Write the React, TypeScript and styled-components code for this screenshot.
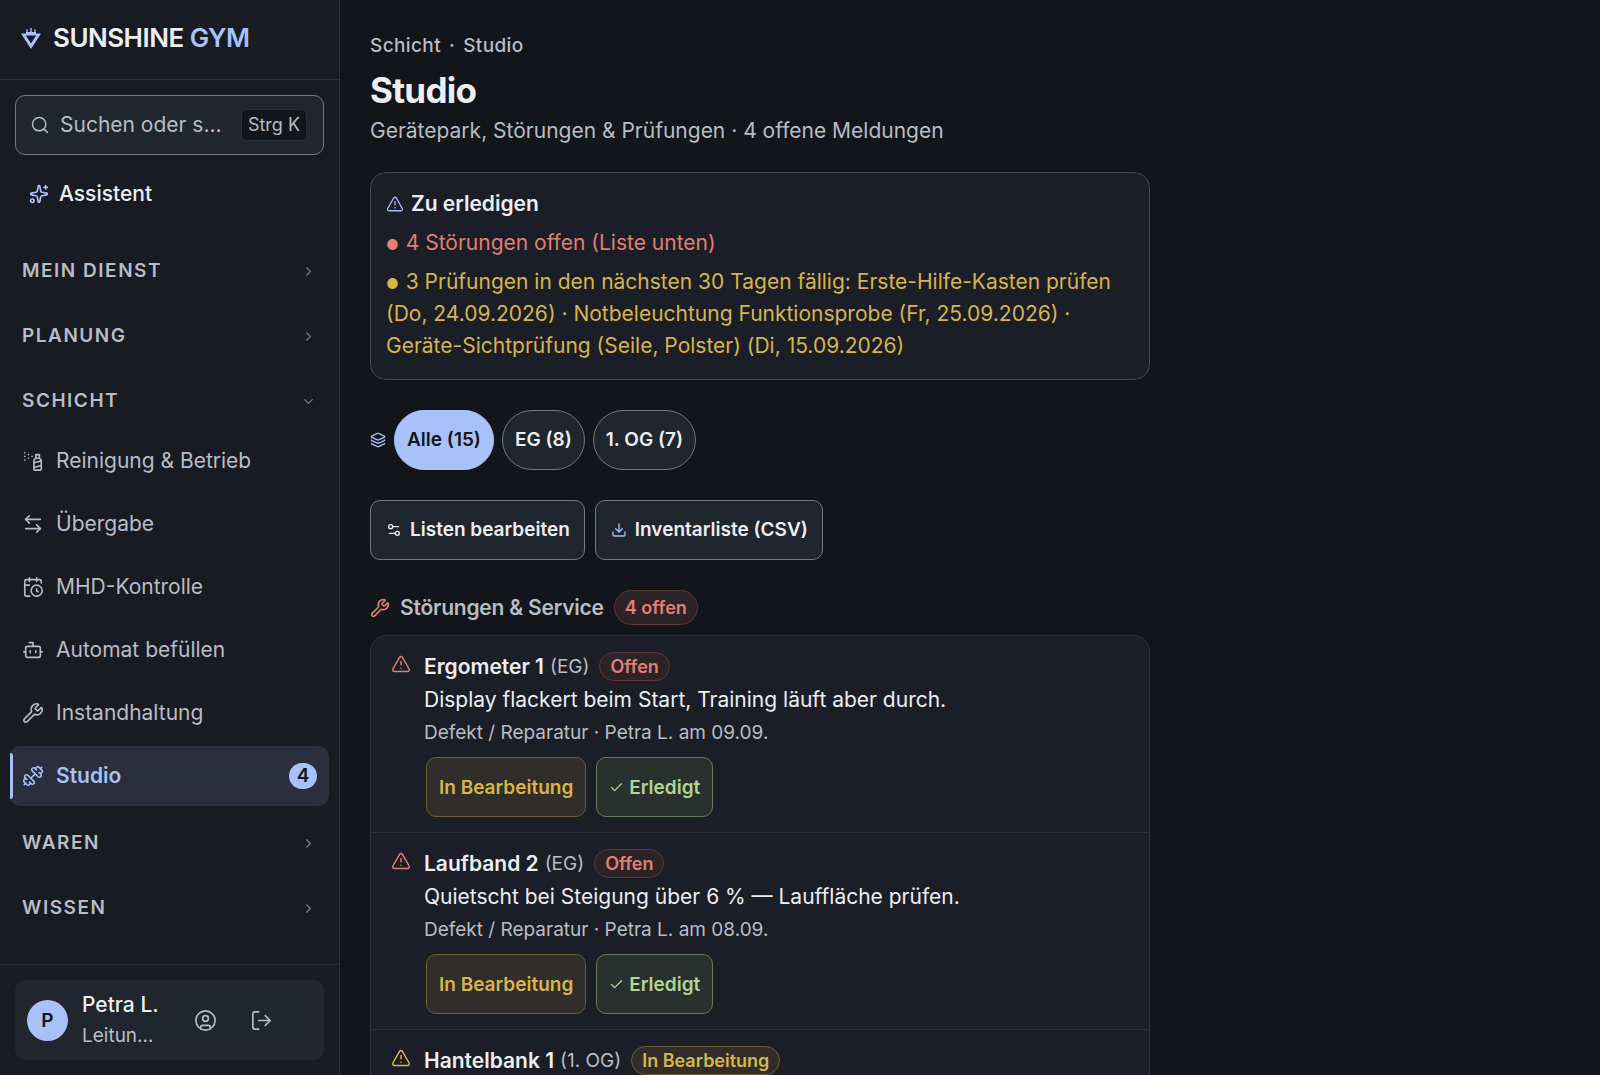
import React from "react";
import styled, { createGlobalStyle, css } from "styled-components";
import {
  ArrowLeftRight, Bot, CalendarClock, Check, ChevronDown, ChevronRight, CircleUser, Download,
  Dumbbell, Layers, LogOut, Search, Settings2, Sparkles, SprayCan, TriangleAlert, Wrench,
} from "lucide-react";

const c = {
  bg: "#12161b",
  side: "#181b22",
  panel: "#1b1e26",
  raised: "#20262d",
  line: "#2b2f37",
  strong: "#747880",
  text: "#eceef4",
  muted: "#b9bcc5",
  accent: "#a9c1f9",
  red: "#e07f72",
  yellow: "#d6b549",
  green: "#b0d492",
};

const Global = createGlobalStyle`
  *, *::before, *::after { box-sizing: border-box; }
  body { margin: 0; background: ${c.bg}; color: ${c.text}; font: 400 21px/32px Inter, "Liberation Sans", sans-serif; }
  button { font: inherit; color: inherit; border: 0; background: none; padding: 0; cursor: pointer; text-align: left; }
  a { color: inherit; text-decoration: none; }
  h1, h2, h3, p, ul { margin: 0; padding: 0; }
  ul { list-style: none; }
  svg { flex: none; }
`;

const Shell = styled.div`
  display: grid;
  grid-template-columns: 340px minmax(0, 1fr);
  height: 100vh;
`;

const Sidebar = styled.aside`
  display: flex;
  flex-direction: column;
  min-height: 0;
  background: ${c.side};
  border-right: 1px solid ${c.line};
`;

const Brand = styled.a`
  display: flex;
  align-items: center;
  gap: 11px;
  height: 80px;
  padding: 0 20px 3px;
  border-bottom: 1px solid ${c.line};
  font-size: 26px;
  font-weight: 600;
  letter-spacing: -0.02em;
`;

const BrandAccent = styled.span`
  color: ${c.accent};
`;

const Tools = styled.div`
  display: flex;
  flex-direction: column;
  gap: 9px;
  padding: 15px 15px 17px;
`;

const SearchButton = styled.button`
  display: flex;
  align-items: center;
  gap: 10px;
  height: 60px;
  padding: 0 16px 0 14px;
  border: 1px solid ${c.strong};
  border-radius: 10px;
  background: ${c.raised};
  color: ${c.muted};
`;

const SearchHint = styled.span`
  flex: 1;
  white-space: nowrap;
`;

const Kbd = styled.kbd`
  padding: 0 6px;
  border: 1px solid ${c.line};
  border-radius: 6px;
  background: ${c.bg};
  font: 400 18px/30px Inter, sans-serif;
  white-space: nowrap;
`;

const AssistantLink = styled.a`
  display: flex;
  align-items: center;
  gap: 10px;
  height: 60px;
  padding: 0 14px;
  font-weight: 500;
  svg { color: ${c.accent}; }
`;

const Nav = styled.nav`
  flex: 1;
  min-height: 0;
  display: flex;
  flex-direction: column;
  gap: 5px;
  padding: 0 10px;
  overflow: hidden;
`;

const GroupButton = styled.button`
  display: flex;
  align-items: center;
  justify-content: space-between;
  width: 100%;
  height: 60px;
  padding: 0 13px 0 12px;
  color: ${c.muted};
  font-size: 19px;
  font-weight: 600;
  letter-spacing: 0.08em;
  text-transform: uppercase;
  svg { color: ${c.strong}; }
`;

const NavList = styled.ul`
  display: flex;
  flex-direction: column;
  gap: 3px;
  padding-bottom: 2px;
`;

const NavLink = styled.a<{ $active?: boolean }>`
  position: relative;
  display: flex;
  align-items: center;
  gap: 12px;
  height: 60px;
  padding: 0 12px;
  border-radius: 10px;
  color: ${c.muted};
  ${(p) => p.$active && css`
    background: #2a2e3d;
    color: ${c.accent};
    font-weight: 600;
    &::before {
      content: "";
      position: absolute;
      inset: 7px auto 7px 0;
      width: 3px;
      border-radius: 0 3px 3px 0;
      background: ${c.accent};
    }
  `}
`;

const Count = styled.span`
  min-width: 28px;
  margin-left: auto;
  border-radius: 13px;
  background: ${c.accent};
  color: ${c.bg};
  font-size: 19px;
  line-height: 26px;
  text-align: center;
`;

const Footer = styled.footer`
  padding: 15px;
  border-top: 1px solid ${c.line};
`;

const UserCard = styled.div`
  display: flex;
  align-items: center;
  height: 80px;
  padding: 0 12px;
  border-radius: 10px;
  background: ${c.raised};
`;

const Avatar = styled.span`
  flex: none;
  width: 41px;
  border-radius: 50%;
  background: ${c.accent};
  color: ${c.bg};
  font-size: 19px;
  font-weight: 600;
  line-height: 41px;
  text-align: center;
`;

const UserText = styled.div`
  display: flex;
  flex-direction: column;
  width: 80px;
  margin: 0 15px 0 14px;
  line-height: 31px;
  white-space: nowrap;
`;

const UserName = styled.span`
  font-weight: 500;
`;

const UserRole = styled.span`
  color: ${c.muted};
  font-size: 19px;
`;

const IconButton = styled.button`
  display: grid;
  place-items: center;
  width: 56px;
  height: 56px;
  color: ${c.muted};
`;

const Main = styled.main`
  min-width: 0;
  padding: 30px;
  overflow-y: auto;
  scrollbar-width: none;
`;

const PageHeader = styled.header`
  margin-bottom: 25px;
`;

const Column = styled.div`
  display: flex;
  flex-direction: column;
  gap: 30px;
  max-width: 780px;
`;

const Crumbs = styled.nav`
  display: flex;
  gap: 8px;
  color: ${c.muted};
  font-size: 19px;
  font-weight: 500;
  letter-spacing: 0.02em;
`;

const Title = styled.h1`
  padding: 6px 0 3px;
  font-size: 35px;
  font-weight: 700;
  line-height: 44px;
  letter-spacing: -0.02em;
`;

const Lead = styled.p`
  color: ${c.muted};
`;

const Todo = styled.section`
  display: flex;
  flex-direction: column;
  gap: 7px;
  padding: 15px 15px 17px;
  border: 1px solid #414650;
  border-radius: 16px;
  background: ${c.panel};
`;

const TodoTitle = styled.h2`
  display: flex;
  align-items: center;
  gap: 7px;
  font-size: 21px;
  font-weight: 600;
  svg { color: ${c.accent}; }
`;

const TodoText = styled.p<{ $tone: string }>`
  color: ${(p) => p.$tone};
`;

const Bullet = styled.span`
  margin-right: 1px;
  font-size: 14px;
  line-height: 1;
`;

const Filters = styled.div`
  display: flex;
  align-items: center;
  gap: 8px;
  svg { color: ${c.accent}; }
`;

const Pill = styled.button<{ $on?: boolean }>`
  height: 60px;
  padding: 0 12px;
  border: 1px solid ${(p) => (p.$on ? c.accent : c.strong)};
  border-radius: 30px;
  background: ${(p) => (p.$on ? c.accent : c.raised)};
  color: ${(p) => (p.$on ? c.bg : c.text)};
  font-size: 19px;
  font-weight: 600;
`;

const Actions = styled.div`
  display: flex;
  gap: 10px;
`;

const ActionButton = styled.button<{ $icon?: string }>`
  display: flex;
  align-items: center;
  gap: 8px;
  height: 60px;
  padding: 0 14px 0 15px;
  border: 1px solid ${c.strong};
  border-radius: 10px;
  background: ${c.raised};
  font-size: 19px;
  font-weight: 600;
  svg { color: ${(p) => p.$icon || c.text}; }
`;

const Section = styled.section`
  display: flex;
  flex-direction: column;
  gap: 10px;
`;

const SectionTitle = styled.h2`
  display: flex;
  align-items: center;
  gap: 10px;
  color: ${c.muted};
  font-size: 21px;
  font-weight: 600;
  letter-spacing: -0.01em;
`;

const tones = {
  red: css`border-color: #5f3838; background: #2c2326; color: ${c.red};`,
  yellow: css`border-color: #67602f; background: #302d2a; color: ${c.yellow};`,
  green: css`border-color: #667a60; background: #29312f; color: ${c.green};`,
};

const Badge = styled.span<{ $tone: keyof typeof tones; $large?: boolean }>`
  padding: 0 10px;
  border: 1px solid;
  border-radius: 18px;
  font-size: 18px;
  font-weight: 600;
  line-height: ${(p) => (p.$large ? 33 : 27)}px;
  letter-spacing: 0;
  ${(p) => tones[p.$tone]}
`;

const IssueList = styled.ul`
  border: 1px solid ${c.line};
  border-radius: 16px;
  background: ${c.panel};
`;

const Issue = styled.li`
  display: flex;
  gap: 13px;
  padding: 14px 20px 15px;
  line-height: 33px;
  & + & { border-top: 1px solid ${c.line}; }
`;

const IssueIcon = styled.span<{ $tone: string }>`
  display: flex;
  padding-top: 4px;
  height: 24px;
  color: ${(p) => p.$tone};
`;

const IssueTitle = styled.h3`
  display: flex;
  align-items: center;
  font-size: 21px;
  font-weight: 600;
`;

const Floor = styled.span`
  margin: 0 10px 0 6px;
  color: ${c.muted};
  font-size: 19px;
  font-weight: 400;
`;

const IssueMeta = styled.p`
  color: ${c.muted};
  font-size: 19px;
`;

const IssueActions = styled(Actions)`
  padding: 8px 2px 0;
`;

const ToneButton = styled.button<{ $tone: keyof typeof tones }>`
  display: flex;
  align-items: center;
  gap: 5px;
  height: 60px;
  padding: 0 12px;
  border: 1px solid;
  border-radius: 10px;
  font-size: 19px;
  font-weight: 600;
  ${(p) => tones[p.$tone]}
`;

const Logo = () => (
  <svg width="22" height="22" viewBox="0 0 22 22" fill={c.accent} aria-hidden="true">
    <path fillRule="evenodd" d="M1 6.5H6V5H16V6.5H21L11 22ZM5.8 8.4L11 16.6L16.2 8.4Z" />
    <path d="M6.4 2.2H7.7V5.5H6.4ZM10.3 1H11.7V5.5H10.3ZM14.3 2.2H15.6V5.5H14.3Z" />
  </svg>
);

const shift = [
  { label: "Reinigung & Betrieb", icon: SprayCan },
  { label: "Übergabe", icon: ArrowLeftRight },
  { label: "MHD-Kontrolle", icon: CalendarClock },
  { label: "Automat befüllen", icon: Bot },
  { label: "Instandhaltung", icon: Wrench },
  { label: "Studio", icon: Dumbbell, count: 4 },
];

const groups = [
  { label: "Mein Dienst" },
  { label: "Planung" },
  { label: "Schicht", items: shift },
  { label: "Waren" },
  { label: "Wissen" },
];

const issues = [
  { name: "Ergometer 1", floor: "EG", status: "Offen", tone: "red", text: "Display flackert beim Start, Training läuft aber durch.", meta: "Defekt / Reparatur · Petra L. am 09.09." },
  { name: "Laufband 2", floor: "EG", status: "Offen", tone: "red", text: "Quietscht bei Steigung über 6 % — Lauffläche prüfen.", meta: "Defekt / Reparatur · Petra L. am 08.09." },
  { name: "Hantelbank 1", floor: "1. OG", status: "In Bearbeitung", tone: "yellow" },
] as { name: string; floor: string; status: string; tone: "red" | "yellow"; text?: string; meta?: string }[];

export default function App() {
  return (
    <>
      <Global />
      <Shell>
        <Sidebar>
          <Brand href="#">
            <Logo />
            <span>SUNSHINE <BrandAccent>GYM</BrandAccent></span>
          </Brand>
          <Tools>
            <SearchButton type="button">
              <Search size={20} strokeWidth={1.75} />
              <SearchHint>Suchen oder s…</SearchHint>
              <Kbd>Strg K</Kbd>
            </SearchButton>
            <AssistantLink href="#">
              <Sparkles size={20} />
              Assistent
            </AssistantLink>
          </Tools>
          <Nav aria-label="Hauptmenü">
            {groups.map((g) => (
              <div key={g.label}>
                <GroupButton type="button" aria-expanded={!!g.items}>
                  {g.label}
                  {g.items ? <ChevronDown size={15} /> : <ChevronRight size={15} />}
                </GroupButton>
                {g.items && (
                  <NavList>
                    {g.items.map(({ label, icon: Icon, count }) => (
                      <li key={label}>
                        <NavLink href="#" $active={!!count} aria-current={count ? "page" : undefined}>
                          <Icon size={22} strokeWidth={1.75} />
                          {label}
                          {count && <Count>{count}</Count>}
                        </NavLink>
                      </li>
                    ))}
                  </NavList>
                )}
              </div>
            ))}
          </Nav>
          <Footer>
            <UserCard>
              <Avatar>P</Avatar>
              <UserText>
                <UserName>Petra L.</UserName>
                <UserRole>Leitun…</UserRole>
              </UserText>
              <IconButton type="button" aria-label="Profil"><CircleUser size={23} strokeWidth={1.75} /></IconButton>
              <IconButton type="button" aria-label="Abmelden"><LogOut size={23} strokeWidth={1.75} /></IconButton>
            </UserCard>
          </Footer>
        </Sidebar>
        <Main>
          <PageHeader>
            <Crumbs aria-label="Brotkrumen"><a href="#">Schicht</a><span>·</span><span>Studio</span></Crumbs>
            <Title>Studio</Title>
            <Lead>Gerätepark, Störungen & Prüfungen · 4 offene Meldungen</Lead>
          </PageHeader>
          <Column>
            <Todo>
              <TodoTitle><TriangleAlert size={18} strokeWidth={1.75} />Zu erledigen</TodoTitle>
              <TodoText $tone={c.red}><Bullet>●</Bullet> 4 Störungen offen (Liste unten)</TodoText>
              <TodoText $tone={c.yellow}>
                <Bullet>●</Bullet> 3 Prüfungen in den nächsten 30 Tagen fällig: Erste-Hilfe-Kasten prüfen (Do, 24.09.2026) · Notbeleuchtung
                Funktionsprobe (Fr, 25.09.2026) · Geräte-Sichtprüfung (Seile, Polster) (Di, 15.09.2026)
              </TodoText>
            </Todo>
            <Filters>
              <Layers size={16} />
              <Pill type="button" $on>Alle (15)</Pill>
              <Pill type="button">EG (8)</Pill>
              <Pill type="button">1. OG (7)</Pill>
            </Filters>
            <Actions>
              <ActionButton type="button"><Settings2 size={16} />Listen bearbeiten</ActionButton>
              <ActionButton type="button" $icon={c.accent}><Download size={16} />Inventarliste (CSV)</ActionButton>
            </Actions>
            <Section>
              <SectionTitle>
                <Wrench size={20} color={c.red} />
                Störungen & Service
                <Badge $tone="red" $large>4 offen</Badge>
              </SectionTitle>
              <IssueList>
                {issues.map((i) => (
                  <Issue key={i.name}>
                    <IssueIcon $tone={c[i.tone]}><TriangleAlert size={20} strokeWidth={1.75} /></IssueIcon>
                    <div>
                      <IssueTitle>
                        {i.name}
                        <Floor>({i.floor})</Floor>
                        <Badge $tone={i.tone}>{i.status}</Badge>
                      </IssueTitle>
                      {i.text && (
                        <>
                          <p>{i.text}</p>
                          <IssueMeta>{i.meta}</IssueMeta>
                          <IssueActions>
                            <ToneButton type="button" $tone="yellow">In Bearbeitung</ToneButton>
                            <ToneButton type="button" $tone="green"><Check size={15} />Erledigt</ToneButton>
                          </IssueActions>
                        </>
                      )}
                    </div>
                  </Issue>
                ))}
              </IssueList>
            </Section>
          </Column>
        </Main>
      </Shell>
    </>
  );
}
